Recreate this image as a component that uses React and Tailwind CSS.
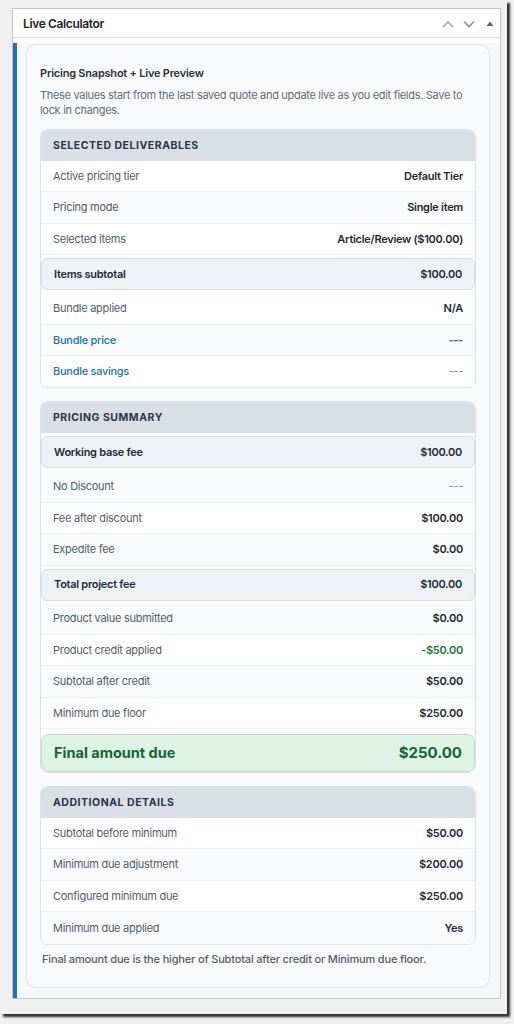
import React from 'react'

const font = { fontFamily: 'Inter, "Liberation Sans", sans-serif' }

const deliverables = [
  { label: 'Active pricing tier', value: 'Default Tier' },
  { label: 'Pricing mode', value: 'Single item' },
  { label: 'Selected items', value: 'Article/Review ($100.00)' },
  { label: 'Items subtotal', value: '$100.00', hl: true },
  { label: 'Bundle applied', value: 'N/A' },
  { label: 'Bundle price', value: '---', blue: true, valueTone: 'blue' },
  { label: 'Bundle savings', value: '---', blue: true, valueTone: 'muted' },
]

const summary = [
  { label: 'Working base fee', value: '$100.00', hl: true },
  { label: 'No Discount', value: '---', valueTone: 'muted' },
  { label: 'Fee after discount', value: '$100.00' },
  { label: 'Expedite fee', value: '$0.00' },
  { label: 'Total project fee', value: '$100.00', hl: true },
  { label: 'Product value submitted', value: '$0.00' },
  { label: 'Product credit applied', value: '-$50.00', valueTone: 'green' },
  { label: 'Subtotal after credit', value: '$50.00' },
  { label: 'Minimum due floor', value: '$250.00' },
]

const details = [
  { label: 'Subtotal before minimum', value: '$50.00' },
  { label: 'Minimum due adjustment', value: '$200.00' },
  { label: 'Configured minimum due', value: '$250.00' },
  { label: 'Minimum due applied', value: 'Yes' },
]

function valueClass(tone) {
  if (tone === 'muted') return 'font-normal text-[#7b8a99]'
  if (tone === 'green') return 'font-semibold text-[#1f7a3d]'
  if (tone === 'blue') return 'font-bold text-[#2271b1]'
  return 'font-semibold text-[#1e2b3a]'
}

function Row({ row, index, last }) {
  if (row.hl) {
    return (
      <div className="my-[3px] flex h-[32px] items-center justify-between rounded-[6px] border border-[#d6dee7] bg-[#eef2f6] px-[12px] text-[11px] tracking-[-0.025em]">
        <span className="font-semibold text-[#1e2b3a]">{row.label}</span>
        <span className="font-semibold text-[#1e2b3a]">{row.value}</span>
      </div>
    )
  }
  return (
    <div
      className={`flex h-[31.4px] items-center justify-between px-[12px] text-[11px] tracking-[-0.025em] ${
        last ? '' : 'border-b border-[#edf1f5]'
      } ${index % 2 === 1 ? 'bg-[#f9fbfc]' : 'bg-white'}`}
    >
      <span className={row.blue ? 'font-medium text-[#2271b1]' : 'text-[#4f5f70]'}>{row.label}</span>
      <span className={valueClass(row.valueTone)}>{row.value}</span>
    </div>
  )
}

function Section({ title, rows, children }) {
  return (
    <div className="overflow-hidden rounded-[8px] border border-[#dbe2ea] bg-white">
      <div className="flex h-[31px] items-center bg-[#d9dfe5] px-[12px] text-[10.5px] font-bold uppercase tracking-[0.05em] text-[#27364a]">
        {title}
      </div>
      {rows.map((r, i) => (
        <Row key={r.label} row={r} index={i} last={i === rows.length - 1 && !children} />
      ))}
      {children}
    </div>
  )
}

function ChevronUp() {
  return (
    <svg width="12" height="8" viewBox="0 0 12 8" fill="none">
      <path d="M1 7 L6 2 L11 7" stroke="#a7aaad" strokeWidth="1.6" />
    </svg>
  )
}

function ChevronDown() {
  return (
    <svg width="12" height="8" viewBox="0 0 12 8" fill="none">
      <path d="M1 1.5 L6 6.5 L11 1.5" stroke="#8c8f94" strokeWidth="1.6" />
    </svg>
  )
}

export default function App() {
  return (
    <div className="h-[1024px] w-[514px] bg-[#f0f0f1]" style={font}>
      <div className="h-[1014px] w-[507px] bg-[#f0f0f1] pl-[12px] pt-[8px] shadow-[3px_3px_2px_rgba(0,0,0,0.8)]">
        <div className="w-[489px] border border-[#c3c4c7] bg-white">
          <div className="flex h-[29px] items-center justify-between border-b border-[#dcdcde] pl-[10px] pr-[6px] pt-[1px]">
            <span className="text-[12px] font-semibold tracking-[-0.03em] text-[#1d2327]">Live Calculator</span>
            <div className="flex items-center">
              <ChevronUp />
              <span className="ml-[9px]">
                <ChevronDown />
              </span>
              <svg width="8" height="8" viewBox="0 0 8 8" className="ml-[11px]">
                <path d="M0.5 6 L4 1.5 L7.5 6 Z" fill="#646970" />
              </svg>
            </div>
          </div>
          <div className="pt-[5px]">
            <div className="border-l-4 border-[#2271b1] bg-[#f6f7f7] pb-[10px] pl-[9px] pr-[10px] pt-[1px]">
              <div className="rounded-[10px] border border-[#dbe2ea] bg-[#f8fafc] px-[13px] pb-[20px] pt-[20px]">
                <div className="text-[11px] font-semibold leading-[16px] tracking-[-0.02em] text-[#2c3338]">
                  Pricing Snapshot + Live Preview
                </div>
                <p className="mt-[7px] text-[11px] leading-[15px] tracking-[-0.028em] text-[#5f6e7d]">
                  These values start from the last saved quote and update live as you edit fields. Save to lock in
                  changes.
                </p>
                <div className="mt-[11px] flex flex-col gap-[13px]">
                  <Section title="Selected Deliverables" rows={deliverables} />
                  <Section title="Pricing Summary" rows={summary}>
                    <div className="mt-[5px] flex h-[38px] items-center justify-between rounded-[7px] border border-[#b9e2c6] bg-[#ddf3e4] px-[12px] text-[#166534]">
                      <span className="text-[14.5px] font-bold">Final amount due</span>
                      <span className="text-[15px] font-bold">$250.00</span>
                    </div>
                  </Section>
                  <Section title="Additional Details" rows={details} />
                </div>
                <p className="mt-[6px] px-[2px] text-[11px] font-medium leading-[16px] tracking-[-0.015em] text-[#50606f]">
                  Final amount due is the higher of Subtotal after credit or Minimum due floor.
                </p>
              </div>
            </div>
          </div>
        </div>
      </div>
    </div>
  )
}
